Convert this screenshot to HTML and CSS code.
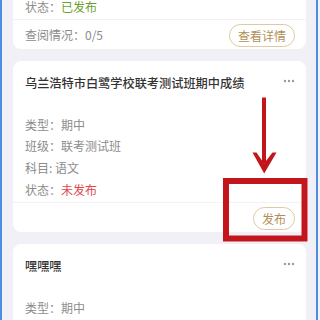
FILE: index.html
```html
<!DOCTYPE html>
<html lang="zh">
<head>
<meta charset="utf-8">
<link rel="stylesheet" href="styles.css">
</head>
<body>
<div class="screen">
  <div class="list">
    <div class="card card-cut">
      <div class="card-body">
        <div class="row">状态：<span class="ok">已发布</span></div>
      </div>
      <div class="card-foot foot-between">
        <span class="row">查阅情况：0/5</span>
        <button class="btn">查看详情</button>
      </div>
    </div>

    <div class="card">
      <div class="card-head">
        <div class="title">乌兰浩特市白鹭学校联考测试班期中成绩</div>
        <svg class="dots" width="12" height="4" viewBox="0 0 12 4"><circle cx="2" cy="2" r="1.2"/><circle cx="6" cy="2" r="1.2"/><circle cx="10" cy="2" r="1.2"/></svg>
      </div>
      <div class="card-body">
        <div class="row">类型：期中</div>
        <div class="row">班级：联考测试班</div>
        <div class="row">科目: 语文</div>
        <div class="row">状态：<span class="no">未发布</span></div>
      </div>
      <div class="card-foot">
        <button class="btn">发布</button>
      </div>
    </div>

    <div class="card">
      <div class="card-head">
        <div class="title">嘿嘿嘿</div>
        <svg class="dots" width="12" height="4" viewBox="0 0 12 4"><circle cx="2" cy="2" r="1.2"/><circle cx="6" cy="2" r="1.2"/><circle cx="10" cy="2" r="1.2"/></svg>
      </div>
      <div class="card-body">
        <div class="row">类型：期中</div>
        <div class="row">班级：联考测试班</div>
      </div>
    </div>
  </div>

  <svg class="annot" width="320" height="320" viewBox="0 0 320 320">
    <rect x="262" y="97.5" width="4" height="66" fill="#c3161c"/>
    <polygon points="252.5,152.5 256.5,152.5 264,163.5 272.5,152.5 276.5,152.5 264.2,173.5" fill="#c3161c"/>
    <rect x="226" y="181" width="78.5" height="57.5" fill="none" stroke="#c3161c" stroke-width="6"/>
  </svg>
</div>
</body>
</html>
```

FILE: styles.css
```css
html, body {
  margin: 0;
  padding: 0;
}
body {
  width: 320px;
  height: 320px;
  overflow: hidden;
  background: #f3f3f7;
  font-family: "Noto Sans CJK SC", "Noto Sans", sans-serif;
}
.screen {
  position: relative;
  width: 314px;
  height: 320px;
  overflow: hidden;
  background: #f1f0f7;
  border-left: 2px solid #4d8ce0;
  border-right: 2px solid #4d8ce0;
  box-sizing: content-box;
}
.list {
  margin-top: -30px;
  padding: 0 10px 0 11px;
  display: flex;
  flex-direction: column;
  gap: 12px;
}
.card {
  background: #ffffff;
  border-radius: 8px;
}
.card-head {
  padding: 12px 11px 0 12px;
  display: flex;
  justify-content: space-between;
  align-items: center;
}
.title {
  font-size: 12.2px;
  line-height: 20px;
  color: #333333;
  font-weight: 500;
}
.dots {
  fill: #9a9a9a;
  margin-top: -4px;
}
.card-body {
  padding: 21px 12px 1px;
}
.card-cut .card-body {
  padding-top: 26px;
}
.row {
  font-size: 12px;
  line-height: 21.7px;
  color: #8c8c8c;
}
.ok {
  color: #6a9e2c;
}
.no {
  color: #e4464c;
}
.card-foot {
  border-top: 1px solid #f3f2f5;
  padding: 4px 11px 2px 12px;
  display: flex;
  justify-content: flex-end;
  align-items: center;
}
.foot-between {
  justify-content: space-between;
}
.btn {
  height: 23px;
  padding: 0 8px;
  border: 1px solid #dfc9a0;
  border-radius: 12px;
  background: #ffffff;
  color: #b38f58;
  font-family: "Noto Sans CJK SC", "Noto Sans", sans-serif;
  font-size: 12px;
  line-height: 21px;
}
.annot {
  position: absolute;
  left: -2px;
  top: 0;
}
```
